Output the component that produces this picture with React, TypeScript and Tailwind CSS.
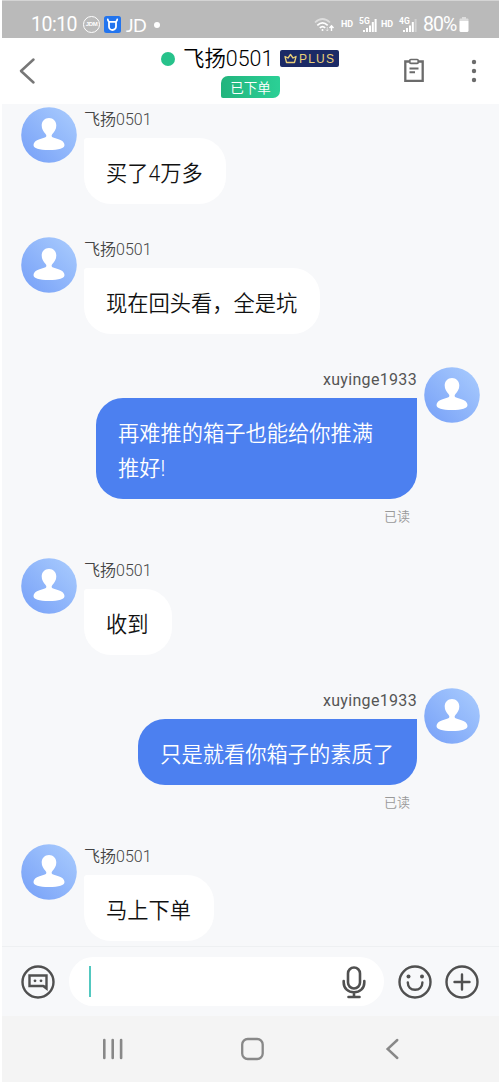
type Message = {
  id: number;
  mine: boolean;
  name: string;
  text: string;
  read?: boolean;
};

const messages: Message[] = [
  { id: 1, mine: false, name: "飞扬0501", text: "买了4万多" },
  { id: 2, mine: false, name: "飞扬0501", text: "现在回头看，全是坑" },
  {
    id: 3,
    mine: true,
    name: "xuyinge1933",
    text: "再难推的箱子也能给你推满推好!",
    read: true,
  },
  { id: 4, mine: false, name: "飞扬0501", text: "收到" },
  {
    id: 5,
    mine: true,
    name: "xuyinge1933",
    text: "只是就看你箱子的素质了",
    read: true,
  },
  { id: 6, mine: false, name: "飞扬0501", text: "马上下单" },
];

function Avatar({ id }: { id: number }) {
  return (
    <svg width="56" height="56" viewBox="0 0 56 56" className="shrink-0">
      <defs>
        <linearGradient id={`avatar-${id}`} x1="0.1" y1="0.9" x2="0.9" y2="0.1">
          <stop offset="0" stopColor="#7ba4f8" />
          <stop offset="1" stopColor="#a5c8fd" />
        </linearGradient>
      </defs>
      <circle cx="28" cy="28" r="27.8" fill={`url(#avatar-${id})`} />
      <path
        d="M28 11c-4.300 0-7.300 3.200-7.300 7.500 0 3.500 1.700 6 3.700 8.200 1.500 1.700 1.300 3.100-.6 3.800l-5.300 1.700c-3.700 1.300-6 3.100-6 5.800 0 3.500 5.500 5 15.500 5s15.500-1.500 15.500-5c0-2.700-2.300-4.500-6-5.800l-5.300-1.700c-1.900-.7-2.100-2.100-.6-3.800 2-2.200 3.700-4.700 3.700-8.200 0-4.300-3-7.500-7.300-7.500z"
        fill="#fff"
      />
    </svg>
  );
}

function Signal({ label, dim }: { label: string; dim?: boolean }) {
  return (
    <div className="relative h-4 w-[18px]">
      <span className="absolute top-0 left-0 text-[8.5px] leading-[8px] font-bold">
        {label}
      </span>
      <svg width="18" height="16" viewBox="0 0 18 16" fill="#fff">
        <rect x="4" y="13" width="2" height="2" />
        <rect x="7" y="11" width="2" height="4" />
        <rect x="10" y="8.500" width="2" height="6.500" />
        <rect x="12.800" y="5" width="2" height="10" />
        <rect x="15.600" y="2" width="2" height="13" opacity={dim ? 0.35 : 1} />
      </svg>
    </div>
  );
}

function StatusBar() {
  return (
    <div className="flex h-[38px] items-center border-t border-[#d4d4d4] bg-[#bababa] pt-[10px] pl-[29px] text-white">
      <span className="w-[52px] text-[19.5px] leading-5 tracking-[-0.5px]">
        10:10
      </span>
      <span className="flex size-[17px] shrink-0 items-center justify-center rounded-full border border-white font-['Liberation_Sans',sans-serif] text-[6px] font-bold tracking-[-0.4px]">
        JDM
      </span>
      <svg width="17" height="17" viewBox="0 0 17 17" className="ml-[4px]">
        <rect width="17" height="17" rx="2.500" fill="#2274ee" />
        <path
          d="M5 5.800v4.700a3.500 3.500 0 0 0 7 0V5.800M3.800 3.500c.2 1.600.9 2.300 2.200 2.300h5c1.300 0 2-.7 2.200-2.300"
          fill="none"
          stroke="#fff"
          strokeWidth="1.800"
          strokeLinecap="round"
        />
      </svg>
      <span className="ml-[5px] w-[19px] font-['Lato',sans-serif] text-[18px] leading-5 tracking-[-0.7px]">
        JD
      </span>
      <span className="ml-[9px] size-[6px] rounded-full bg-white" />
      <svg
        width="21"
        height="16"
        viewBox="0 0 21 16"
        className="ml-[154px]"
        fill="none"
        stroke="#fff"
        strokeWidth="1.700"
      >
        <path d="M1 5.500q7.500-7 15 0" opacity=".5" />
        <path d="M3.300 8.300q5.200-4.800 10.400 0M5.800 10.800q2.700-2.500 5.400 0" />
        <circle cx="8.500" cy="13" r="1" fill="#fff" stroke="none" />
        <path d="M13.300 10v4M11.900 12.500l1.400 1.500 1.400-1.500" strokeWidth="1" opacity=".5" />
        <path d="M17.500 14V9M15.500 11l2-2.200 2 2.200" strokeWidth="1.400" />
      </svg>
      <span className="ml-[6px] w-[13px] text-[9px] font-bold">HD</span>
      <div className="ml-[5px]">
        <Signal label="5G" />
      </div>
      <span className="ml-[4px] w-[13px] text-[9px] font-bold">HD</span>
      <div className="ml-[5px]">
        <Signal label="4G" dim />
      </div>
      <span className="ml-[6px] w-[36px] text-[19.5px] leading-5 tracking-[-1px]">
        80%
      </span>
      <svg width="10" height="15" viewBox="0 0 10 15" fill="#fff">
        <path d="M3 0h4v1.500h1.500q1 0 1 1V4H.5V2.500q0-1 1-1H3z" opacity=".5" />
        <path d="M.5 4h9v9.500q0 1.500-1.500 1.500H2q-1.500 0-1.500-1.500z" />
      </svg>
    </div>
  );
}

function Header() {
  return (
    <div className="flex h-[66px] items-start bg-white">
      <svg
        width="20"
        height="28"
        viewBox="0 0 20 28"
        className="mt-[19px] ml-[16px]"
        fill="none"
        stroke="#777"
        strokeWidth="2.500"
        strokeLinecap="round"
        strokeLinejoin="round"
      >
        <path d="M15.500 2.500 3 14l12.500 11.500" />
      </svg>
      <div className="ml-[123px] flex w-[180px] flex-col">
        <div className="flex h-[38px] items-center pt-[3px]">
          <span className="size-[14px] rounded-full bg-[#27c28b]" />
          <span className="ml-[8px] w-[91px] pt-px text-[21.400px] font-[350] whitespace-nowrap text-black">
            飞扬0501
          </span>
          <span className="ml-[6px] flex h-[17px] w-[59px] items-center rounded-[2px] bg-[#1b2a66] pl-[4px] text-[#e9cf78]">
            <svg
              width="13"
              height="11"
              viewBox="0 0 13 11"
              fill="none"
              stroke="currentColor"
              strokeWidth="1.300"
              strokeLinejoin="round"
            >
              <path d="M2.500 9.500h8l1.500-6-3 1.500-2.500-3.500L4 5 1 3.500z" />
            </svg>
            <span className="ml-[2px] font-['Liberation_Sans',sans-serif] text-[12px] tracking-[1.200px]">
              PLUS
            </span>
          </span>
        </div>
        <span className="ml-[60px] flex h-[22px] w-[59px] items-center justify-center rounded-tl-[7px] rounded-tr-[2px] rounded-br-[7px] rounded-bl-[2px] bg-linear-to-r from-[#22b47d] to-[#2bd096] pt-[2px] text-[13.500px] font-[350] text-white">
          已下单
        </span>
      </div>
      <svg
        width="22"
        height="26"
        viewBox="0 0 22 26"
        className="mt-[20px] ml-[62px]"
        fill="none"
        stroke="#6b6b6b"
        strokeWidth="2.300"
      >
        <path d="M6 3.500H2.300v19.400h17.400V3.500H16" />
        <rect x="6.800" y="1.500" width="8.400" height="3.800" rx="1" strokeWidth="1.700" />
        <path d="M6.500 10.500h9M6.500 14.300h5.500" strokeWidth="2" />
      </svg>
      <svg
        width="6"
        height="24"
        viewBox="0 0 6 24"
        className="mt-[21px] ml-[46px]"
        fill="#6b6b6b"
      >
        <circle cx="3" cy="3" r="2.200" />
        <circle cx="3" cy="12" r="2.200" />
        <circle cx="3" cy="21" r="2.200" />
      </svg>
    </div>
  );
}

function MessageRow({ message }: { message: Message }) {
  if (message.mine) {
    return (
      <div className="flex justify-end gap-[7px]">
        <div className="flex flex-col items-end">
          <span className="h-[31px] text-base leading-[26px] tracking-[0.330px] text-[#555]">
            {message.name}
          </span>
          <div className="max-w-[321px] rounded-[27px] rounded-tr-none bg-[#4c80f0] pt-[17.500px] pr-[23px] pb-[13.500px] pl-[22px] text-[21.250px] leading-[35px] font-[350] text-white">
            {message.text}
          </div>
          {message.read && (
            <span className="mr-[7px] h-[26px] pt-[9px] text-[13px] leading-[18px] font-[350] text-[#999]">
              已读
            </span>
          )}
        </div>
        <Avatar id={message.id} />
      </div>
    );
  }
  return (
    <div className="flex gap-[7px]">
      <Avatar id={message.id} />
      <div className="flex flex-col items-start">
        <span className="h-[31px] text-base leading-[26px] font-[350] text-[#444]">
          {message.name}
        </span>
        <div className="rounded-[27px] rounded-tl-[3px] bg-white pt-[17.500px] pr-[23px] pb-[13.500px] pl-[22px] text-[21.250px] leading-[35px] font-[350] text-[#111]">
          {message.text}
        </div>
      </div>
    </div>
  );
}

function InputBar() {
  return (
    <div className="flex h-[70px] items-center border-t border-[#eef0f2] bg-[#f7f8fa] pl-[19px]">
      <svg
        width="34"
        height="34"
        viewBox="0 0 34 34"
        fill="none"
        stroke="#505050"
        strokeWidth="2.400"
      >
        <circle cx="17" cy="17" r="15.500" />
        <path d="M8.500 10.500h17v13l-3.300-2.500H8.500z" />
        <path d="M22 21h3.500v3z" fill="#505050" strokeWidth="1" />
        <circle cx="14" cy="15.800" r="1.400" fill="#505050" stroke="none" />
        <circle cx="20" cy="15.800" r="1.400" fill="#505050" stroke="none" />
      </svg>
      <div className="ml-[14px] flex h-[49px] w-[315px] items-center justify-between rounded-full bg-white pr-[18px] pl-[20px]">
        <span className="h-[31px] w-[1.500px] bg-[#52c8c0]" />
        <svg
          width="24"
          height="34"
          viewBox="0 0 24 34"
          fill="none"
          stroke="#505050"
          strokeWidth="2.600"
          strokeLinecap="round"
        >
          <rect x="6" y="2.500" width="12" height="21" rx="6" />
          <path d="M1.700 16v1.500c0 6 4.500 9.800 10.300 9.800s10.300-3.800 10.300-9.800V16M12 27.500v4M6.500 32h11" />
        </svg>
      </div>
      <svg
        width="34"
        height="34"
        viewBox="0 0 34 34"
        className="ml-[14px]"
        fill="none"
        stroke="#505050"
        strokeWidth="2.400"
        strokeLinecap="round"
      >
        <circle cx="17" cy="17" r="15.500" />
        <circle cx="10.500" cy="11.500" r="2" fill="#505050" stroke="none" />
        <circle cx="24" cy="11.500" r="2" fill="#505050" stroke="none" />
        <path d="M9.800 17.500c0 4.500 3 7.300 7.300 7.300s7.300-2.800 7.300-7.300" />
      </svg>
      <svg
        width="34"
        height="34"
        viewBox="0 0 34 34"
        className="ml-[13px]"
        fill="none"
        stroke="#505050"
        strokeWidth="2.400"
        strokeLinecap="round"
      >
        <circle cx="17" cy="17" r="15.500" />
        <path d="M17 9.500v15M9.500 17h15" />
      </svg>
    </div>
  );
}

function NavBar() {
  return (
    <div className="flex h-[66px] items-center bg-[#f4f4f4] pl-[100px] text-[#888]">
      <svg width="22" height="22" viewBox="0 0 22 22" stroke="currentColor" strokeWidth="2.600" strokeLinecap="round">
        <path d="M2.300 2v18M10.700 2v18M19.100 2v18" />
      </svg>
      <svg width="24" height="24" viewBox="0 0 24 24" className="ml-[117px]" fill="none" stroke="currentColor" strokeWidth="2.300">
        <rect x="1.200" y="2" width="20.500" height="20" rx="5.500" />
      </svg>
      <svg
        width="14"
        height="22"
        viewBox="0 0 14 22"
        className="ml-[120px]"
        fill="none"
        stroke="currentColor"
        strokeWidth="2.400"
        strokeLinecap="round"
      >
        <path d="M12.300 2 2.600 11l9.700 9" />
      </svg>
    </div>
  );
}

export default function App() {
  return (
    <div className="h-[1083px] w-[500px] overflow-hidden bg-white pr-px pl-[2px] font-[Roboto,'Noto_Sans_CJK_SC',sans-serif]">
      <StatusBar />
      <Header />
      <div className="flex h-[842px] flex-col gap-[33px] bg-[#f7f8fa] pt-[3px] pr-[19px] pl-[19px]">
        {messages.map((message) => (
          <MessageRow key={message.id} message={message} />
        ))}
      </div>
      <InputBar />
      <NavBar />
    </div>
  );
}
